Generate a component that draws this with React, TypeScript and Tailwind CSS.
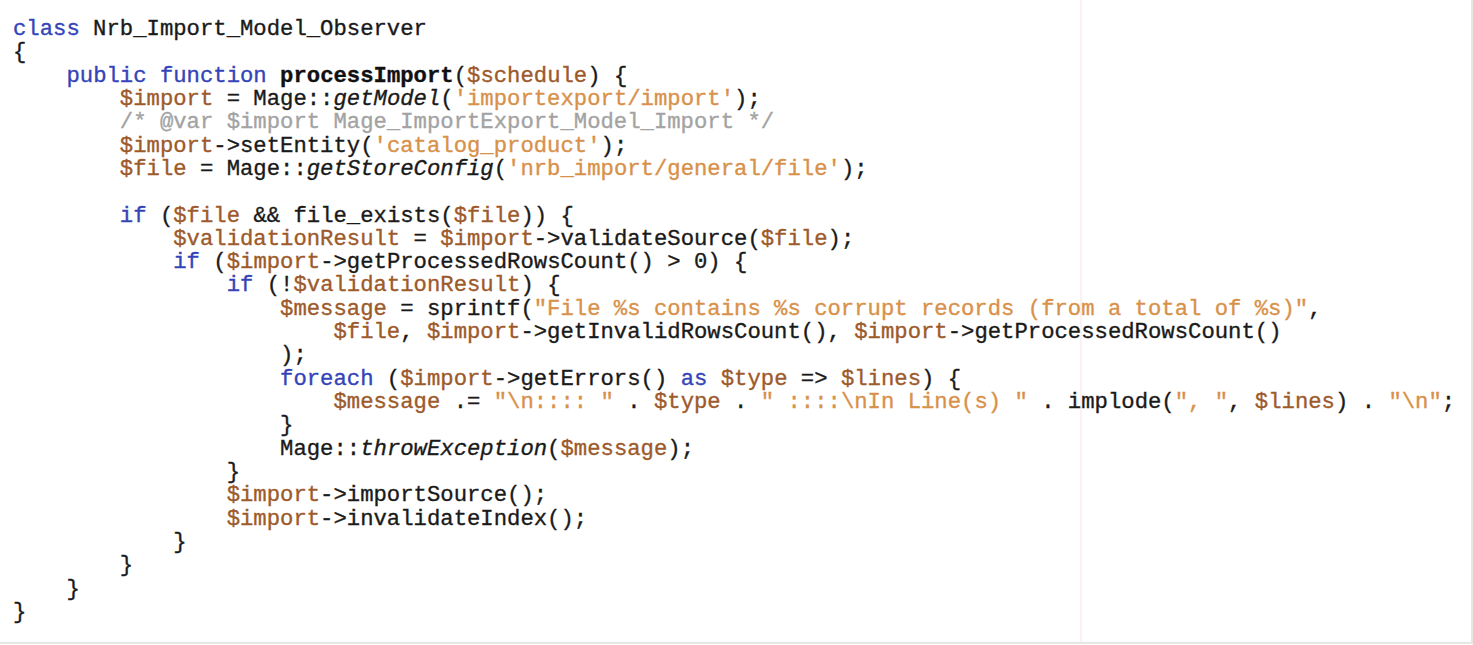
import React from 'react'

type Kind = 'k' | 'v' | 's' | 'c' | 't' | 'i' | 'b'
type Tok = [Kind, string]

const colors: Record<Kind, string> = {
  k: 'text-[#3444b8]',
  v: 'text-[#9d5a2b]',
  s: 'text-[#d8914a]',
  c: 'text-[#a3a3a3]',
  t: 'text-[#1a1a1a]',
  i: 'text-[#1a1a1a] italic',
  b: 'text-[#111111] font-bold',
}

const lines: Tok[][] = [
  [['k', 'class'], ['t', ' Nrb_Import_Model_Observer']],
  [['t', '{']],
  [['t', '    '], ['k', 'public function'], ['t', ' '], ['b', 'processImport'], ['t', '('], ['v', '$schedule'], ['t', ') {']],
  [['t', '        '], ['v', '$import'], ['t', ' = Mage::'], ['i', 'getModel'], ['t', '('], ['s', "'importexport/import'"], ['t', ');']],
  [['t', '        '], ['c', '/* @var $import Mage_ImportExport_Model_Import */']],
  [['t', '        '], ['v', '$import'], ['t', '->setEntity('], ['s', "'catalog_product'"], ['t', ');']],
  [['t', '        '], ['v', '$file'], ['t', ' = Mage::'], ['i', 'getStoreConfig'], ['t', '('], ['s', "'nrb_import/general/file'"], ['t', ');']],
  [['t', ' ']],
  [['t', '        '], ['k', 'if'], ['t', ' ('], ['v', '$file'], ['t', ' && file_exists('], ['v', '$file'], ['t', ')) {']],
  [['t', '            '], ['v', '$validationResult'], ['t', ' = '], ['v', '$import'], ['t', '->validateSource('], ['v', '$file'], ['t', ');']],
  [['t', '            '], ['k', 'if'], ['t', ' ('], ['v', '$import'], ['t', '->getProcessedRowsCount() > 0) {']],
  [['t', '                '], ['k', 'if'], ['t', ' (!'], ['v', '$validationResult'], ['t', ') {']],
  [['t', '                    '], ['v', '$message'], ['t', ' = sprintf('], ['s', '"File %s contains %s corrupt records (from a total of %s)"'], ['t', ',']],
  [['t', '                        '], ['v', '$file'], ['t', ', '], ['v', '$import'], ['t', '->getInvalidRowsCount(), '], ['v', '$import'], ['t', '->getProcessedRowsCount()']],
  [['t', '                    );']],
  [['t', '                    '], ['k', 'foreach'], ['t', ' ('], ['v', '$import'], ['t', '->getErrors() '], ['k', 'as'], ['t', ' '], ['v', '$type'], ['t', ' => '], ['v', '$lines'], ['t', ') {']],
  [['t', '                        '], ['v', '$message'], ['t', ' .= '], ['s', '"\\n:::: "'], ['t', ' . '], ['v', '$type'], ['t', ' . '], ['s', '" ::::\\nIn Line(s) "'], ['t', ' . implode('], ['s', '", "'], ['t', ', '], ['v', '$lines'], ['t', ') . '], ['s', '"\\n"'], ['t', ';']],
  [['t', '                    }']],
  [['t', '                    Mage::'], ['i', 'throwException'], ['t', '('], ['v', '$message'], ['t', ');']],
  [['t', '                }']],
  [['t', '                '], ['v', '$import'], ['t', '->importSource();']],
  [['t', '                '], ['v', '$import'], ['t', '->invalidateIndex();']],
  [['t', '            }']],
  [['t', '        }']],
  [['t', '    }']],
  [['t', '}']],
]

const App = () => {
  return (
    <div className="relative h-[644px] w-[1473px] overflow-hidden border-r-2 border-b-2 border-[#e9e6e1] bg-white">
      {/* faint editor margin guide */}
      <div className="absolute top-0 bottom-0 left-[1080px] w-[2px] bg-[#fcf0f4]" />
      <pre className="relative pl-[13px] pt-[18px] font-['Liberation_Mono','Courier_New',monospace] text-[22.25px] leading-[23.32px] [-webkit-text-stroke:0.35px]">
        {lines.map((line, i) => (
          <div key={i} className="whitespace-pre">
            {line.map(([kind, text], j) => (
              <span key={j} className={colors[kind]}>{text}</span>
            ))}
          </div>
        ))}
      </pre>
    </div>
  )
}

export default App
